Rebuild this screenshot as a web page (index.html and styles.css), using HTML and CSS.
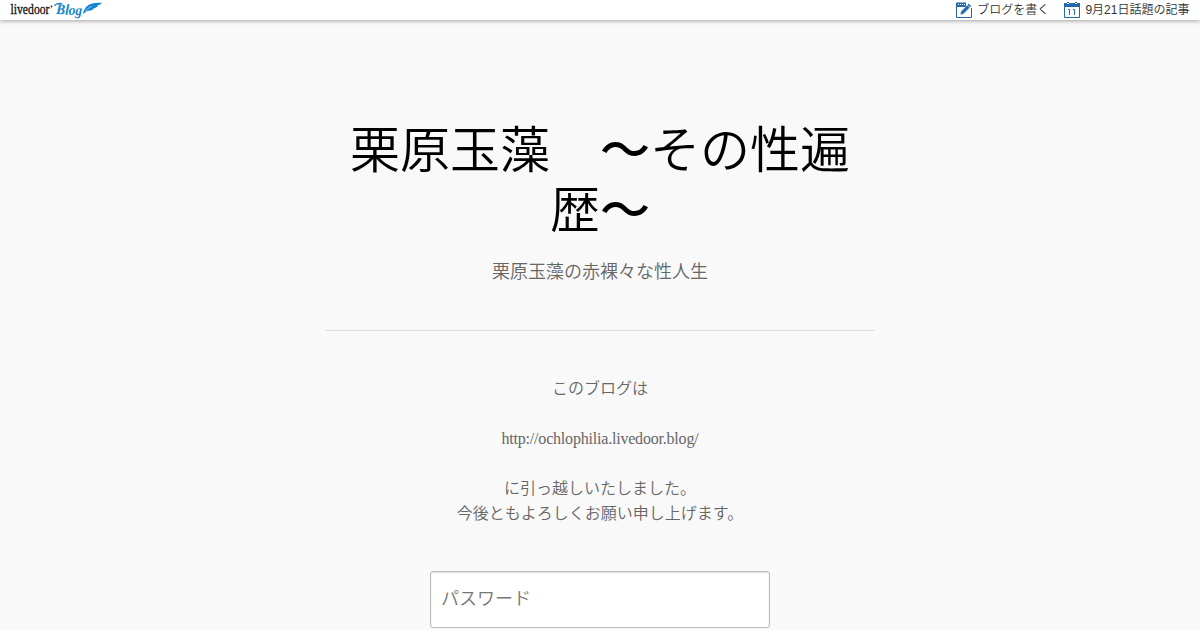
FILE: index.html
```
<!DOCTYPE html>
<html lang="ja">
<head>
    <meta charset="UTF-8">
    <meta name="viewport" content="width=device-width, initial-scale=1.0">
    <title>栗原玉藻　〜その性遍歴〜</title>
    <link rel="stylesheet" href="styles.css">
</head>
<body>
    <header class="blog-bar">
        <a class="logo" href="#" aria-label="livedoor Blog">
            <svg width="93" height="20" viewBox="0 0 93 20">
                <text class="logo-livedoor" x="0.5" y="14" textLength="39" lengthAdjust="spacingAndGlyphs">livedoor</text>
                <circle cx="41.5" cy="6.5" r="0.9" fill="#222"/>
                <text class="logo-blog" x="46" y="14" textLength="26" lengthAdjust="spacingAndGlyphs" transform="rotate(3 46 14)">Blog</text>
                <path d="M44.5 6Q46 3 52 3.5" fill="none" stroke="#0f86cf" stroke-width="1.2"/>
                <path d="M73 13.5C75 6 80 2 92 3Q90 5 87 5.5L88 6Q86 8 83 8.5L84 9Q81 11 77 11L74 13.5Z" fill="#1585d2"/>
                <path d="M75 11.5Q78 8 82 6" fill="none" stroke="#fff" stroke-width="0.5"/>
            </svg>
        </a>
        <ul class="bar-menu">
            <li>
                <svg width="16" height="16" viewBox="0 0 16 16">
                    <path d="M10 1H0.5V15.5H15.5V6" fill="none" stroke="#2369a9"/>
                    <path d="M0 1H10V5H0Z" fill="#2369a9"/>
                    <path d="M2 2.5H3M4 2.5H5M6 2.5H7M8 2.5H9" stroke="#fff"/>
                    <path d="M4 13L5 9.5L12.5 1.5L15.5 4L7.5 12Z" fill="#2369a9" stroke="#fff" stroke-width="0.5"/>
                    <path d="M11 3L14 5.5" stroke="#fff" stroke-width="0.7"/>
                </svg>
                <a href="#">ブログを書く</a>
            </li>
            <li>
                <svg width="16" height="16" viewBox="0 0 16 16">
                    <path d="M0.5 2V15.5H15.5V2" fill="#fff" stroke="#2369a9"/>
                    <path d="M0 1H3V0H5V1H11V0H13V1H16V5H0Z" fill="#2369a9"/>
                    <path d="M3 1.5H5M11 1.5H13" stroke="#fff"/>
                    <path d="M4 7.5H5.5V13M9 7.5H10.5V13" fill="none" stroke="#2369a9"/>
                </svg>
                <a href="#">9月21日話題の記事</a>
            </li>
        </ul>
    </header>

    <main class="container">
        <div class="blog-header">
            <h1>栗原玉藻　<span class="wave">〜</span>その性遍<br>歴<span class="wave">〜</span></h1>
            <p>栗原玉藻の赤裸々な性人生</p>
        </div>
        <div class="message">
            このブログは<br>
            <br>
            <span class="url">http://ochlophilia.livedoor.blog/</span><br>
            <br>
            に引っ越しいたしました。<br>
            今後ともよろしくお願い申し上げます。
        </div>
        <form class="password-form">
            <input type="password" placeholder="パスワード">
        </form>
    </main>
</body>
</html>
```
FILE: styles.css
```
* {
    box-sizing: border-box;
}
body {
    margin: 0;
    height: 630px;
    overflow: hidden;
    background: #f9f9f9;
    color: #666;
    font-family: "Liberation Serif", "Noto Sans CJK JP", serif;
    font-weight: 350;
}
.blog-bar {
    display: flex;
    justify-content: space-between;
    height: 20px;
    padding: 0 10px;
    background: #fff;
    box-shadow: 0 1px 4px rgba(0, 0, 0, 0.35);
    font-family: "Liberation Sans", "Noto Sans CJK JP", sans-serif;
    font-size: 12px;
}
.logo svg {
    display: block;
}
.logo-livedoor {
    font-family: "Liberation Serif", serif;
    font-size: 14.5px;
    fill: #111;
    stroke: #111;
    stroke-width: 0.3px;
}
.logo-blog {
    font-family: "Liberation Serif", serif;
    font-size: 15px;
    font-style: italic;
    font-weight: bold;
    fill: #0f86cf;
}
.bar-menu {
    display: flex;
    gap: 15px;
    margin: 0;
    padding: 0 0.6px 0 0;
    list-style: none;
}
.bar-menu li {
    display: flex;
    gap: 5px;
}
.bar-menu svg {
    margin-top: 2px;
}
.bar-menu a {
    color: #333;
    line-height: 20px;
    text-decoration: none;
}
.container {
    width: 550px;
    margin: 0 auto;
    padding-top: 101px;
    text-align: center;
}
.blog-header {
    height: 210px;
    border-bottom: 1px solid #ddd;
}
.blog-header h1 {
    margin: 0;
    color: #000;
    font-size: 50px;
    font-weight: 350;
    line-height: 60px;
}
.blog-header .wave {
    font-weight: 500;
}
.blog-header p {
    margin: 16px 0 0;
    font-size: 18px;
    line-height: 30px;
}
.message {
    padding: 45px 0;
    font-size: 16px;
    line-height: 25px;
}
.message .url {
    letter-spacing: -0.2px;
}
.password-form input {
    display: block;
    width: 340px;
    height: 57px;
    margin: 0 auto;
    padding: 0 10px;
    border: 1px solid #bbb;
    border-radius: 3px;
    background: #fff;
    box-shadow: inset 0 1px 2px rgba(0, 0, 0, 0.12);
    font-family: inherit;
    font-size: 18px;
    font-weight: 350;
}
.password-form input::placeholder {
    color: #757575;
}
```
